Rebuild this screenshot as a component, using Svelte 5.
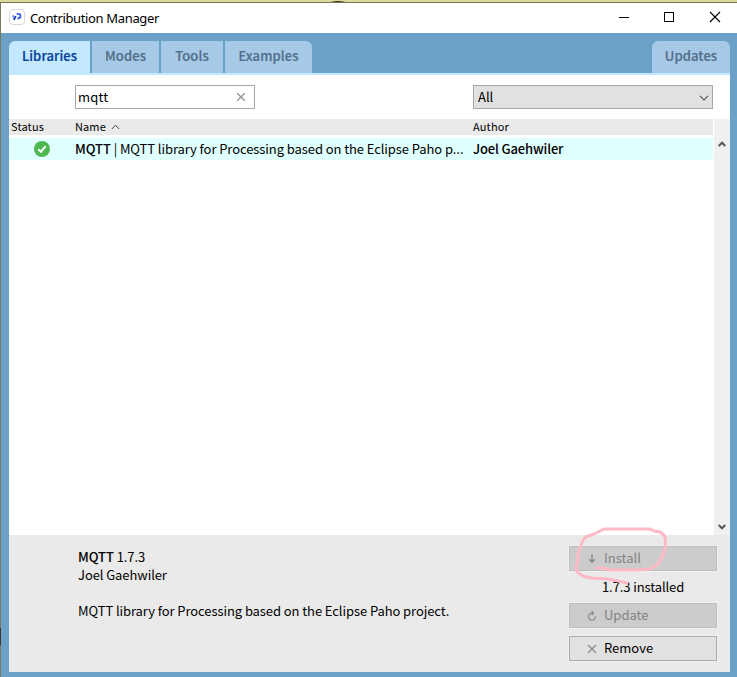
<script>
  const tabs = [
    { label: 'Libraries', width: 81, active: true },
    { label: 'Modes', width: 67 },
    { label: 'Tools', width: 62 },
    { label: 'Examples', width: 87 }
  ];
  let query = $state('mqtt');
</script>

<div class="screen">
  <div class="backdrop"></div>
  <div class="window">
    <header class="titlebar">
      <svg class="logo" width="16" height="16" viewBox="0 0 16 16">
        <rect x=".5" y=".5" width="15" height="15" rx="3.5" fill="#fff" stroke="#d8d8dc" />
        <path d="M7.600 4.900H9.300A2.200 2.200 0 0 1 9.300 9.300H8.400" fill="none" stroke="#3465ee" stroke-width="1.900" />
        <path d="M3 6.500L5 6V8.700L3.800 9Z" fill="#6b92f8" />
        <path d="M6.600 7L6 8.600L4.900 10.900" fill="none" stroke="#2038b8" stroke-width="1.900" />
      </svg>
      <span class="title">Contribution Manager</span>
      <svg class="controls" width="104" height="12" viewBox="0 0 104 12" fill="none" stroke="#000">
        <path d="M0 6.5H10" />
        <rect x="45.5" y="1.5" width="9" height="9" />
        <path d="M91 1L101 11M101 1L91 11" stroke-width="1.1" />
      </svg>
    </header>

    <nav class="tabs">
      {#each tabs as tab}
        <div class="tab" class:active={tab.active} style="width: {tab.width}px"><span>{tab.label}</span></div>
      {/each}
      <div class="tab updates"><span>Updates</span></div>
    </nav>

    <main>
      <div class="filters">
        <div class="search">
          <input bind:value={query} spellcheck="false" />
          <svg width="10" height="10" viewBox="0 0 10 10"><path d="M1.2 1.2L8.8 8.8M8.8 1.2L1.2 8.8" stroke="#999" stroke-width="1.5" /></svg>
        </div>
        <div class="select">
          <span>All</span>
          <svg width="10" height="6" viewBox="0 0 10 6"><path d="M1 .8L5 4.8L9 .8" fill="none" stroke="#555" stroke-width="1.2" /></svg>
        </div>
      </div>

      <div class="list">
        <div class="table">
          <div class="head">
            <span class="status">Status</span>
            <span class="name">Name
              <svg width="9" height="6" viewBox="0 0 9 6"><path d="M.8 5L4.5 1.2L8.2 5" fill="none" stroke="#444" /></svg>
            </span>
            <span>Author</span>
          </div>
          <div class="row">
            <span class="status">
              <svg width="16" height="16" viewBox="0 0 16 16"><circle cx="8" cy="8" r="8" fill="#4db752" /><path d="M4.3 8.3L6.9 10.7L11.6 5.2" fill="none" stroke="#fff" stroke-width="2" /></svg>
            </span>
            <span class="name"><b>MQTT</b> | MQTT library for Processing based on the Eclipse Paho p...</span>
            <b class="author">Joel Gaehwiler</b>
          </div>
        </div>
        <div class="scroll">
          <svg width="8" height="6" viewBox="0 0 8 6"><path d="M.7 5L4 1.7L7.3 5" fill="none" stroke="#555" stroke-width="2" /></svg>
          <svg width="8" height="6" viewBox="0 0 8 6"><path d="M.7 1L4 4.3L7.3 1" fill="none" stroke="#555" stroke-width="2" /></svg>
        </div>
      </div>

      <section class="details">
        <div class="info">
          <div><b>MQTT</b> 1.7.3</div>
          <div class="by">Joel Gaehwiler</div>
          <p>MQTT library for Processing based on the Eclipse Paho project.</p>
        </div>
        <div class="actions">
          <button disabled>
            <svg width="10" height="10" viewBox="0 0 10 10"><path d="M5 .5V8M2.2 5.4L5 8.2L7.8 5.4" fill="none" stroke="#8c8c8c" stroke-width="1.5" /></svg>
            <span class="install">Install</span>
          </button>
          <div class="version">1.7.3 installed</div>
          <button disabled>
            <svg width="10" height="10" viewBox="0 0 10 10"><path d="M8.500 5.200A3.500 3.500 0 1 1 5 2.100H6.500M4.600 .2L6.600 2.100L4.600 4" fill="none" stroke="#8c8c8c" stroke-width="1.200" /></svg>
            <span class="update">Update</span>
          </button>
          <button class="last">
            <svg width="10" height="10" viewBox="0 0 10 10"><path d="M1 1L9 9M9 1L1 9" stroke="#8c8c8c" stroke-width="1.3" /></svg>
            <span class="remove">Remove</span>
          </button>
        </div>
      </section>
    </main>
  </div>
  <div class="edge"></div>
  <svg class="scribble" width="100" height="70" viewBox="0 0 100 70">
    <path d="M26 48L35 48L38 50H68L80 49L84 47L88 44L92 37L95 29L95.500 19L94 15L90 12L84 11L80 9H34L24 14L16 17L13 20L10 28L8 34V41L6 46L7 52L13 56L21 58L38 59L48 61L57 63" fill="none" stroke="#ffb9c6" stroke-width="3" stroke-linejoin="round" stroke-linecap="round" />
  </svg>
</div>

<style>
  :global(body) { margin: 0; overflow: hidden; }
  .screen { position: relative; width: 737px; height: 677px; display: flex; flex-direction: column; font: 13px/18px "Noto Sans CJK SC", sans-serif; color: #000; }
  .screen, .screen * { box-sizing: border-box; }
  svg { display: block; flex: none; }
  span, b, .info div, p, .version { white-space: nowrap; }
  b { font-weight: 500; }
  .backdrop { height: 3px; flex: none; background: radial-gradient(ellipse 8px 1.5px at 338px 2px, #4c3924 40%, transparent), #ded99c; border-bottom: 1px solid #77734f; }
  .window { flex: 1; display: flex; flex-direction: column; background: #6ba0c7; border-left: 1px solid #777961; }
  .titlebar { height: 30px; flex: none; display: flex; align-items: center; background: #fff; padding: 0 14px 0 8px; }
  .logo { margin-top: -2px; }
  .title { margin: -1px 0 0 5px; font: 13px/18px "Noto Sans", sans-serif; letter-spacing: -.35px; }
  .controls { margin: -2px 0 0 auto; }
  .tabs { height: 40px; flex: none; display: flex; gap: 2px; margin: 0 7px 0 8px; padding-top: 8px; }
  .tab { height: 32px; display: flex; justify-content: center; background: #a5c9e6; color: #546f8a; font-size: 13px; line-height: 30px; font-weight: 500; letter-spacing: .1px; -webkit-text-stroke: .2px currentColor; }
  .tab:first-child { border-top-left-radius: 6px; }
  .tab:nth-child(4) { border-top-right-radius: 6px; }
  .tab.active { background: #c3e8ff; color: #05409b; }
  .updates { width: 78px; margin-left: auto; border-radius: 6px 6px 0 0; }
  main { height: 599px; margin: 0 7px 0 8px; border-top: 2px solid #c3e8ff; background: #fff; display: flex; flex-direction: column; }
  .filters { height: 44px; flex: none; display: flex; padding: 10px 17px 0 66px; justify-content: space-between; }
  .search, .select { height: 24px; border: 1px solid #a6a6a6; display: flex; align-items: center; justify-content: space-between; }
  .search { width: 180px; padding: 0 8px 0 2px; background: #fff; }
  .search svg { margin-top: -1px; }
  input { width: 150px; height: 20px; margin-top: -2px; padding: 0; border: 0; outline: 0; background: none; font: inherit; letter-spacing: .2px; }
  .select { width: 240px; padding: 0 3px 0 4px; background: #e1e1e1; }
  .select svg { margin-top: 2px; }
  .list { flex: 1; display: flex; }
  .table { width: 704px; }
  .head { height: 16px; display: flex; background: #eaeaea; font-size: 11px; line-height: 14px; letter-spacing: .15px; }
  .status { width: 66px; flex: none; padding-left: 2px; }
  .name { width: 398px; flex: none; display: flex; align-items: center; white-space: pre; letter-spacing: -.08px; }
  .head .name { height: 14px; letter-spacing: .1px; }
  .head .name svg { margin: 2px 0 0 3px; }
  .author { letter-spacing: -.15px; }
  .row { height: 22px; margin-top: 3px; background: #e0ffff; display: flex; align-items: center; }
  .row .status { padding-left: 25px; }
  .scroll { width: 16px; margin-left: auto; background: #f0f0f0; display: flex; flex-direction: column; justify-content: space-between; align-items: center; padding: 22px 1px 5px 0; }
  .details { height: 137px; flex: none; display: flex; justify-content: space-between; background: #eaeaea; padding: 11px 13px 0 69px; }
  .info { padding-top: 2px; letter-spacing: -.08px; }
  p { margin: 18px 0 0; }
  .actions { width: 148px; }
  button { display: flex; align-items: center; width: 148px; height: 25px; padding: 0 0 0 17px; border: 1px solid #adadad; border-radius: 0; background: #e1e1e1; color: #000; font: inherit; box-shadow: 0 0 0 1px #efefef; }
  button:disabled { background: #ccc; border-color: #bfbfbf; color: #838383; }
  button span { margin: -2px 0 0 7px; }
  .last { margin-top: 8px; }
  .version { height: 32px; line-height: 32px; padding-left: 33px; letter-spacing: -.1px; }
  .edge { position: absolute; left: 0; top: 628px; width: 1px; height: 17px; background: #3d3630; }
  .scribble { position: absolute; left: 570px; top: 520px; pointer-events: none; }
</style>
